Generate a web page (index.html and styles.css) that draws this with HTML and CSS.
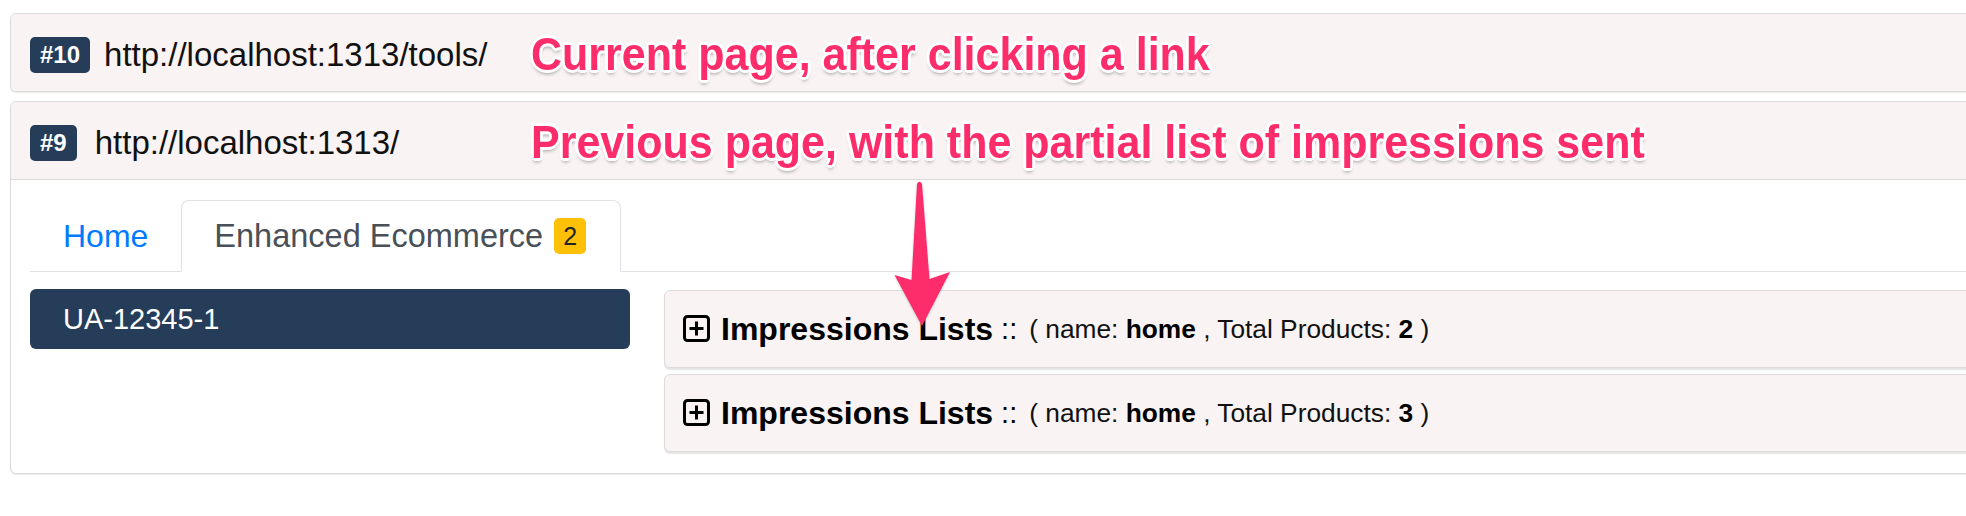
FILE: index.html
```html
<!DOCTYPE html>
<html lang="en">
<head>
<meta charset="utf-8">
<title>Hits</title>
<link rel="stylesheet" href="styles.css">
</head>
<body>
<div class="page">
  <div class="card">
    <div class="hit-head"><span class="num">#10</span><span class="url">http://localhost:1313/tools/</span></div>
  </div>
  <div class="card">
    <div class="hit-head"><span class="num">#9</span><span class="url url-wide">http://localhost:1313/</span></div>
    <div class="hit-body">
      <ul class="tabs">
        <li class="tab">Home</li>
        <li class="tab active">Enhanced Ecommerce<span class="count">2</span></li>
      </ul>
      <div class="row">
        <div class="side"><div class="account">UA-12345-1</div></div>
        <div class="lists">
          <div class="imp">
            <svg class="plus" viewBox="0 0 27 27" width="27" height="27"><rect x="1.5" y="1.5" width="24" height="24" rx="3" fill="none" stroke="#000" stroke-width="3"/><path d="M13.5 6.5v14M6.5 13.5h14" stroke="#000" stroke-width="3"/></svg>
            <span class="title">Impressions Lists</span><span class="sep">::</span><span class="meta">( name: <b>home</b> , Total Products: <b>2</b> )</span>
          </div>
          <div class="imp">
            <svg class="plus" viewBox="0 0 27 27" width="27" height="27"><rect x="1.5" y="1.5" width="24" height="24" rx="3" fill="none" stroke="#000" stroke-width="3"/><path d="M13.5 6.5v14M6.5 13.5h14" stroke="#000" stroke-width="3"/></svg>
            <span class="title">Impressions Lists</span><span class="sep">::</span><span class="meta">( name: <b>home</b> , Total Products: <b>3</b> )</span>
          </div>
        </div>
      </div>
    </div>
  </div>
  <div class="note note-current">Current page, after clicking a link</div>
  <div class="note note-previous">Previous page, with the partial list of impressions sent</div>
  <svg class="arrow" viewBox="0 0 65 150" width="65" height="150"><path d="M27 4 Q29.5 -0.5 32 4 L39.5 99 L60 92 L32 146 L4.5 95 L21.5 100 Z" fill="#fd2d6c"/></svg>
</div>
</body>
</html>
```

FILE: styles.css
```css
html, body {
  margin: 0;
  padding: 0;
  overflow: hidden;
  background: #ffffff;
}

body {
  font-family: "Liberation Sans", Arial, sans-serif;
  color: #1b1b1b;
}

.page {
  position: relative;
  padding: 13px 0 0 10px;
  margin-right: -40px;
}

.card {
  border: 1px solid #dcdada;
  border-radius: 6px;
  background: #ffffff;
  box-shadow: 0 1px 1px rgba(0, 0, 0, 0.08);
  margin-bottom: 9px;
  overflow: hidden;
}

.hit-head {
  height: 73px;
  padding: 4px 19px 0 19px;
  display: flex;
  align-items: center;
  background: #f9f3f3;
}

.hit-body {
  border-top: 1px solid #dcdada;
  padding: 20px 19px 21px 19px;
}

.num {
  display: inline-block;
  height: 36px;
  line-height: 36px;
  padding: 0 10px;
  background: #253d59;
  color: #ffffff;
  font-size: 24px;
  font-weight: 700;
  border-radius: 5px;
}

.url {
  margin-left: 14px;
  font-size: 33px;
  line-height: 38px;
  color: #111111;
}

.url-wide {
  margin-left: 18px;
}

.tabs {
  list-style: none;
  margin: 0;
  padding: 0;
  display: flex;
  border-bottom: 1px solid #dee2e6;
}

.tab {
  display: flex;
  align-items: center;
  padding: 16px 32px;
  line-height: 38px;
  font-size: 32px;
  color: #007bff;
  border: 1px solid transparent;
  border-top-left-radius: 8px;
  border-top-right-radius: 8px;
  margin-bottom: -1px;
}

.tab.active {
  color: #495057;
  background: #ffffff;
  border-color: #dee2e6 #dee2e6 #ffffff;
  font-size: 32.5px;
  padding-right: 34px;
}

.count {
  display: inline-block;
  margin-left: 11px;
  height: 36px;
  line-height: 36px;
  padding: 0 9px;
  background: #ffc107;
  color: #212529;
  font-size: 25px;
  border-radius: 5px;
}

.row {
  display: flex;
  gap: 34px;
  margin-top: 17px;
  align-items: flex-start;
}

.side {
  width: 600px;
  flex: none;
}

.account {
  height: 60px;
  line-height: 60px;
  padding: 0 33px;
  background: #253d59;
  color: #ffffff;
  font-size: 29px;
  border-radius: 6px;
}

.lists {
  flex: 1;
  margin-top: 1px;
  display: flex;
  flex-direction: column;
  gap: 6px;
}

.imp {
  height: 76px;
  display: flex;
  align-items: center;
  padding: 0 18px;
  background: #f9f3f3;
  border: 1px solid #dcdada;
  border-radius: 6px;
  box-shadow: 0 2px 1px rgba(0, 0, 0, 0.1);
  color: #000000;
}

.plus {
  flex: none;
  margin-top: -1px;
}

.title {
  margin-left: 11px;
  font-size: 32px;
  font-weight: 700;
}

.sep {
  margin-left: 8px;
  font-size: 29px;
}

.meta {
  margin-left: 12px;
  font-size: 26.3px;
  color: #111111;
}

.meta b {
  font-weight: 700;
  color: #000000;
}

.note {
  position: absolute;
  left: 531px;
  font-size: 46px;
  line-height: 46px;
  font-weight: 700;
  color: #fd2d6c;
  white-space: nowrap;
  transform: scaleX(0.935);
  transform-origin: 0 50%;
  text-shadow:
    2px 0 0 #fff, -2px 0 0 #fff, 0 2px 0 #fff, 0 -2px 0 #fff,
    2px 2px 0 #fff, -2px -2px 0 #fff, 2px -2px 0 #fff, -2px 2px 0 #fff,
    3px 0 0 #fff, -3px 0 0 #fff, 0 3px 0 #fff, 0 -3px 0 #fff,
    0 4px 4px rgba(0, 0, 0, 0.35);
}

.note-current {
  top: 31px;
}

.note-previous {
  top: 119px;
}

.arrow {
  position: absolute;
  left: 890px;
  top: 180px;
  filter: drop-shadow(0 1px 1px rgba(0, 0, 0, 0.2));
}
```
